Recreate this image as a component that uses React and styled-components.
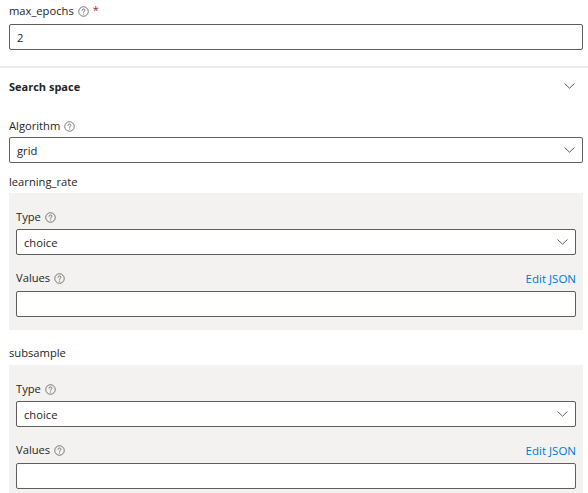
import React from "react";
import styled, { createGlobalStyle } from "styled-components";

const Global = createGlobalStyle`
  html, body { margin: 0; padding: 0; background: #ffffff; }
  body { font-family: "Open Sans", "Noto Sans", sans-serif; color: #323130; }
  * { box-sizing: border-box; }
`;

const Page = styled.div`
  width: 588px;
  display: flex;
  flex-direction: column;
`;

const Section = styled.div`
  padding: 1px 5px 0 9px;
  display: flex;
  flex-direction: column;
`;

const Field = styled.div`
  display: flex;
  flex-direction: column;
  margin-top: ${(p) => p.$mt || 0}px;
`;

const LabelRow = styled.div`
  height: 20px;
  display: flex;
  align-items: center;
  justify-content: space-between;
  margin-bottom: ${(p) => p.$mb ?? 2}px;
`;

const Label = styled.span`
  display: inline-flex;
  align-items: center;
  font-size: 11.2px;
  line-height: 20px;
  color: #252423;
`;

const Required = styled.span`
  color: #a4262c;
  font-size: 11px;
  margin-left: 4px;
  margin-top: -3px;
`;

const Link = styled.a`
  font-size: 11.5px;
  color: #0078d4;
  text-decoration: none;
  cursor: pointer;
`;

const Box = styled.div`
  height: 26px;
  border: 1px solid #605e5c;
  border-radius: 2px;
  background: #ffffff;
  display: flex;
  align-items: center;
  justify-content: space-between;
  padding: 0 7px 0 7px;
  font-size: 11.2px;
  color: #252423;
`;

const Separator = styled.div`
  height: 2px;
  background: #edebe9;
  margin-top: 16px;
`;

const Header = styled.div`
  height: 20px;
  margin-top: 8px;
  padding: 0 13px 0 9px;
  display: flex;
  align-items: center;
  justify-content: space-between;
`;

const HeaderTitle = styled.span`
  font-size: 11px;
  font-weight: 700;
  color: #252423;
`;

const ParamName = styled.div`
  font-size: 11.2px;
  line-height: 20px;
  height: 20px;
  color: #252423;
  margin-top: ${(p) => p.$mt}px;
  margin-bottom: ${(p) => p.$mb}px;
`;

const Panel = styled.div`
  background: #f3f2f1;
  padding: 14px 7px 13px 7px;
  display: flex;
  flex-direction: column;
`;

const Info = () => (
  <svg width="11" height="11" viewBox="0 0 12 12" style={{ marginLeft: 4 }}>
    <circle cx="6" cy="6" r="5.2" fill="none" stroke="#605e5c" strokeWidth="0.9" />
    <path d="M4.4 4.7 C4.4 3.7 5.1 3.2 6 3.2 C6.9 3.2 7.6 3.8 7.6 4.6 C7.6 5.6 6.1 5.7 6.1 6.9"
      fill="none" stroke="#605e5c" strokeWidth="0.9" strokeLinecap="round" />
    <circle cx="6.1" cy="8.7" r="0.6" fill="#605e5c" />
  </svg>
);

const Chevron = () => (
  <svg width="11" height="6" viewBox="0 0 11 6">
    <path d="M0.5 0.5 L5.5 5.2 L10.5 0.5" fill="none" stroke="#605e5c" strokeWidth="1" />
  </svg>
);

const ParamPanel = () => (
  <Panel>
    <Field>
      <LabelRow>
        <Label>Type<Info /></Label>
      </LabelRow>
      <Box>
        choice
        <Chevron />
      </Box>
    </Field>
    <Field $mt={13}>
      <LabelRow $mb={3}>
        <Label>Values<Info /></Label>
        <Link>Edit JSON</Link>
      </LabelRow>
      <Box />
    </Field>
  </Panel>
);

export default function App() {
  return (
    <Page>
      <Global />
      <Section>
        <Field>
          <LabelRow $mb={3}>
            <Label>
              max_epochs<Info /><Required>*</Required>
            </Label>
          </LabelRow>
          <Box>2</Box>
        </Field>
      </Section>
      <Separator />
      <Header>
        <HeaderTitle>Search space</HeaderTitle>
        <Chevron />
      </Header>
      <Section>
        <Field $mt={19}>
          <LabelRow $mb={1}>
            <Label>Algorithm<Info /></Label>
          </LabelRow>
          <Box>
            grid
            <Chevron />
          </Box>
        </Field>
        <ParamName $mt={9} $mb={1}>learning_rate</ParamName>
        <ParamPanel />
        <ParamName $mt={13} $mb={2}>subsample</ParamName>
        <ParamPanel />
      </Section>
    </Page>
  );
}
